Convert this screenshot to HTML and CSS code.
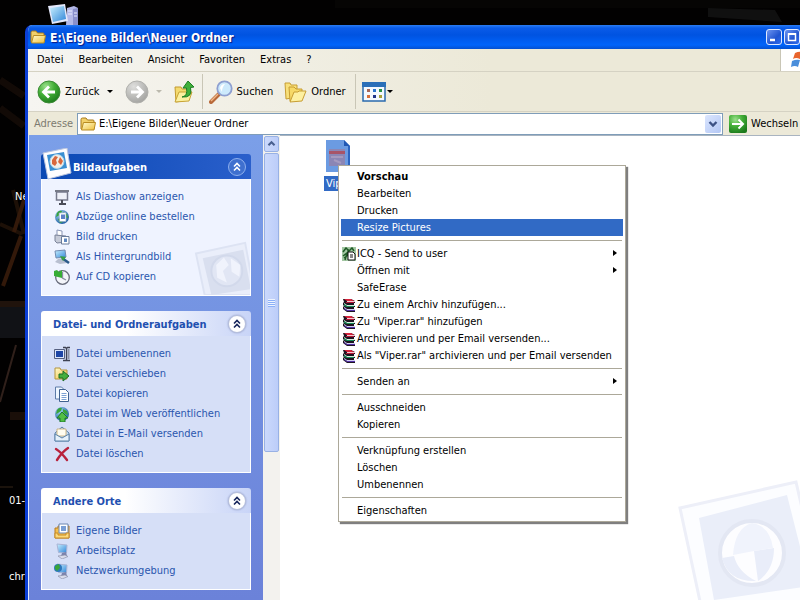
FILE: index.html
```html
<!DOCTYPE html>
<html lang="de">
<head>
<meta charset="utf-8">
<title>E:\Eigene Bilder\Neuer Ordner</title>
<link rel="stylesheet" href="styles.css">
</head>
<body>
<svg class="defs" aria-hidden="true">
  <defs>
    <linearGradient id="gFolder" x1="0" y1="0" x2="1" y2="1"><stop offset="0" stop-color="#fffbd0"/><stop offset="1" stop-color="#efc03a"/></linearGradient>
    <radialGradient id="gGreen" cx=".35" cy=".25" r=".8"><stop offset="0" stop-color="#9be08c"/><stop offset=".5" stop-color="#41ad35"/><stop offset="1" stop-color="#1c7a1c"/></radialGradient>
    <radialGradient id="gGrey" cx=".35" cy=".25" r=".8"><stop offset="0" stop-color="#dededc"/><stop offset="1" stop-color="#a3a3a0"/></radialGradient>
    <linearGradient id="gScreen" x1="0" y1="0" x2="1" y2="1"><stop offset="0" stop-color="#c9f0ff"/><stop offset="1" stop-color="#2f86d8"/></linearGradient>
    <radialGradient id="gGlobe" cx=".35" cy=".3" r=".8"><stop offset="0" stop-color="#9fd6f2"/><stop offset="1" stop-color="#15549e"/></radialGradient>
    <symbol id="folder" viewBox="0 0 16 14"><path d="M1 12V2.500Q1 1 2.500 1H6L7.500 3H13Q14 3 14 4V12Z" fill="#f1d06a" stroke="#a77a1d"/><path d="M1.500 13L3.500 5.500H15.500L14 13Z" fill="url(#gFolder)" stroke="#b98c22"/></symbol>
    <symbol id="chevrons" viewBox="0 0 16 16"><path d="M5 7.500L8 4.500L11 7.500M5 11.500L8 8.500L11 11.500" fill="none" stroke="currentColor" stroke-width="1.600"/></symbol>
    <symbol id="rar" viewBox="0 0 14 14"><path d="M1 1H9L13 3V5L12 5V7L13 7V9H12V11H13V14H5L1 11V9L2 8L1 7V5L2 4Z" fill="#1d1420"/><path d="M2 1H9L12 3H5Z" fill="#d8243c"/><path d="M5 3H13V4H5Z" fill="#f3c9cf"/><path d="M4 4H12V5H4Z" fill="#b01838"/><path d="M2 5L5 7H13V8H5L2 6Z" fill="#d6efe0"/><path d="M2 6L5 8H12V9H5L2 8Z" fill="#168a55"/><path d="M2 9L5 11H13V12H5L2 10Z" fill="#d5d2f2"/><path d="M2 10L5 12H13V13H5L2 11Z" fill="#5432a8"/></symbol>
    <symbol id="pc" viewBox="0 0 16 16"><path d="M3 1L13 2L12.500 10L4.500 9.500Z" fill="url(#gScreen)" stroke="#a8b4d6"/><path d="M8 10L12 9L13 13H7Z" fill="#7c84ad"/><path d="M4 13L11 12L14 13.500L8 16Z" fill="#d9dcea" stroke="#8389a5" stroke-width=".6"/></symbol>
    <symbol id="globe" viewBox="0 0 16 16"><circle cx="8" cy="8" r="7" fill="url(#gGlobe)"/><path d="M3 4Q5 1 8 2L7 5L4 7L2 8ZM9 3L13 5L14 9L11 8L9 6ZM4 10L8 9L9 13L6 14Z" fill="#38a43a"/></symbol>
    <symbol id="doc" viewBox="0 0 16 16"><path d="M1.500 1H7.500L9.500 3V13H1.500Z" fill="#eef6ff" stroke="#5c7ba8"/><path d="M5.500 3.500H11.500L14.500 6.500V15.500H5.500Z" fill="#fff" stroke="#3f618f"/><path d="M7.500 7.500H12.500M7.500 9.500H12.500M7.500 11.500H12.500M7.500 13.500H12.500" stroke="#7da2d4"/></symbol>
  </defs>
</svg>

<main class="desktop">
  <svg class="wallpaper" viewBox="0 0 800 600" preserveAspectRatio="xMinYMin slice" aria-hidden="true">
    <rect width="800" height="600" fill="#020101"/>
    <path d="M0 80L24 96M0 108L24 126" stroke="#120a06" stroke-width="7"/>
    <path d="M13 190L24 234M0 224L22 234" stroke="#1d1007" stroke-width="4" fill="none"/>
    <path d="M21 236L3 286M24 200L14 232" stroke="#33190a" stroke-width="4"/>
    <path d="M0 301H26V338H0Z" fill="#111216"/><path d="M0 301H26V307H0Z" fill="#20130c"/>
    <path d="M16 345L0 402" stroke="#30201b" stroke-width="2"/>
    <path d="M10 412H26V420H10Z" fill="#1a0f09"/><path d="M0 487H13" stroke="#1b130c" stroke-width="2"/>
    <path d="M708 8L775 10L782 22L708 17Z" fill="#101010"/><path d="M335 0H800V8H335Z" fill="#060504"/>
  </svg>
  <svg class="desk-pc" viewBox="0 0 34 24" aria-hidden="true"><path d="M20 7L27 5L31 7V24H19Z" fill="#b4b9e8"/><path d="M26 8L31 7V24H26Z" fill="#8a90cc"/><path d="M21 10H25M21 13H25M27 12H30M27 15H30" stroke="#e9ecff"/><path d="M1 5L18 3L21 20L5 23Z" fill="#e4e8fb"/><path d="M3 7L17 5L19 18L6 21Z" fill="url(#gScreen)"/></svg>
  <span class="desk-label label-new">Neu</span>
  <span class="desk-label label-01">01-</span>
  <span class="desk-label label-chr">chris</span>

  <section class="window">
    <header class="titlebar">
      <svg class="title-icon" aria-hidden="true"><use href="#folder"/></svg>
      <h1>E:\Eigene Bilder\Neuer Ordner</h1>
      <button class="caption" aria-label="Minimieren"><svg viewBox="0 0 14 14"><path d="M3 10H8" stroke="#fff" stroke-width="2.500"/></svg></button>
      <button class="caption" aria-label="Maximieren"><svg viewBox="0 0 14 14"><path d="M3.500 4V10.500H10.500V4Z" fill="none" stroke="#fff" stroke-width="1.500"/><path d="M3 4H11" stroke="#fff" stroke-width="2"/></svg></button>
    </header>

    <nav class="menubar">
      <button>Datei</button><button>Bearbeiten</button><button>Ansicht</button><button>Favoriten</button><button>Extras</button><button>?</button>
      <span class="flag"><svg viewBox="0 0 20 18" aria-hidden="true"><path d="M4 2Q8 0 12 1L9 8Q5 6 2 8Z" fill="#e8642c"/><path d="M1 10Q5 8 9 9L7 16Q4 14 0 16Z" fill="#4a8edb"/><path d="M13 2Q16 3 20 1L18 8Q14 9 11 8Z" fill="#78b943"/></svg></span>
    </nav>

    <div class="toolbar">
      <button class="tool">
        <svg class="round" viewBox="0 0 24 24" aria-hidden="true"><circle cx="12" cy="12" r="11" fill="url(#gGreen)" stroke="#3b8a35"/><path d="M18 12H7M12 6.500L6.500 12L12 17.500" fill="none" stroke="#fff" stroke-width="2.800"/></svg>
        Zurück
      </button>
      <button class="drop" aria-label="Verlauf zurück"><span class="arrow"></span></button>
      <button class="tool forward" aria-label="Vorwärts" disabled>
        <svg class="round" viewBox="0 0 24 24" aria-hidden="true"><circle cx="12" cy="12" r="11" fill="url(#gGrey)" stroke="#b0b0ac"/><path d="M6 12H17M12 6.500L17.500 12L12 17.500" fill="none" stroke="#fff" stroke-width="2.800"/></svg>
      </button>
      <button class="drop" aria-label="Verlauf vorwärts" disabled><span class="arrow"></span></button>
      <button class="tool up" aria-label="Aufwärts">
        <svg class="round" viewBox="0 0 24 24" aria-hidden="true"><path d="M3 7H9L10 9H17V20L4 22Z" fill="#f4da6e" stroke="#c29a2e"/><path d="M3 22L7 12H20L17 21Z" fill="#fbf0a0" stroke="#c8a436"/><path d="M10 17Q16 16 14.500 8H11L16 1L22 7L18.500 7.500Q21 18 10 17Z" fill="#3fb03a" stroke="#1f7e24"/></svg>
      </button>
      <span class="divider"></span>
      <button class="tool">
        <svg class="round" viewBox="0 0 24 24" aria-hidden="true"><path d="M10 14L2 22" stroke="#b8693a" stroke-width="4" stroke-linecap="round"/><path d="M9 14L2 21" stroke="#f0b888" stroke-width="1.500"/><circle cx="15.500" cy="8.500" r="7.200" fill="#cdeafc" stroke="#8e9fd0" stroke-width="1.800"/><path d="M11 8Q12 4 16 4Q13 7 13 12Z" fill="#fff"/></svg>
        Suchen
      </button>
      <button class="tool folders">
        <svg class="round" viewBox="0 0 24 24" aria-hidden="true"><path d="M2 3H7L8 5H14V17L3 19Z" fill="#f8e07a" stroke="#c79d33"/><path d="M6 7H11L13 9H19V19L7 21Z" fill="#f6d967" stroke="#c79d33"/><path d="M7 22L11 12H15L16 11H23L19 21Z" fill="#fdf0a0" stroke="#c79d33"/></svg>
        Ordner
      </button>
      <span class="divider"></span>
      <button class="tool views" aria-label="Ansichten">
        <svg class="round" viewBox="0 0 24 20" aria-hidden="true"><path d="M1 1H23V19H1Z" fill="#f4f9fe" stroke="#2a6aad" stroke-width="1.500"/><path d="M0 0H24V5H0Z" fill="#2a6fb8"/><path d="M5 7H8V10H5Z" fill="#a86858"/><path d="M11 7H14V10H11Z" fill="#2a74cc"/><path d="M17 7H20V10H17Z" fill="#289044"/><path d="M5 13H8V16H5Z" fill="#d8703a"/><path d="M11 13H14V16H11Z" fill="#1e3488"/><path d="M17 13H20V16H17Z" fill="#a8a03a"/></svg>
        <span class="arrow"></span>
      </button>
    </div>

    <form class="addressbar">
      <label for="address">Adresse</label>
      <div class="combo">
        <svg aria-hidden="true"><use href="#folder"/></svg>
        <input id="address" type="text" value="E:\Eigene Bilder\Neuer Ordner">
        <button type="button" class="combo-drop" aria-label="Liste öffnen"><svg viewBox="0 0 16 18"><path d="M4.500 7L8 10.500L11.500 7" fill="none" stroke="#3d5285" stroke-width="2.400"/></svg></button>
      </div>
      <button type="button" class="go"><svg viewBox="0 0 18 18" aria-hidden="true"><rect width="18" height="18" rx="2" fill="url(#gGreen)"/><path d="M3 9H14M9.500 4.500L14 9L9.500 13.500" fill="none" stroke="#fff" stroke-width="2"/></svg>Wechseln</button>
    </form>

    <div class="body">
      <aside class="sidebar">
        <section class="panel primary">
          <header>
            <svg class="photo" viewBox="0 0 30 32" aria-hidden="true"><path d="M1 5L25 0L29 25L6 31Z" fill="#fdfdff" stroke="#b9c4de"/><path d="M5 7L22 4L25 20L8 23Z" fill="#3a8fd2"/><circle cx="15" cy="13.500" r="7" fill="#f1efe9" stroke="#a9d4ec"/><path d="M10 12L13 8L16 9L14 12L15 15L13 18L10 16ZM18 9L21 13L19 17L16 14Z" fill="#d8683d"/></svg>
            <h2>Bildaufgaben</h2>
            <button aria-label="Einklappen"><svg><use href="#chevrons"/></svg></button>
          </header>
          <ul>
            <li><a href="#"><svg viewBox="0 0 16 16"><path d="M1 2H15" stroke="#777a86" stroke-width="2"/><path d="M2.500 3H13.500V11H2.500Z" fill="#eef0f8" stroke="#777a8c" stroke-width="1.500"/><path d="M8 11V14M5 15H12" stroke="#4a4c58" stroke-width="2"/></svg>Als Diashow anzeigen</a></li>
            <li><a href="#"><svg><use href="#globe"/></svg><svg class="over" viewBox="0 0 16 16"><path d="M5 4L12 3.500V12.500H5.500Z" fill="#fff" stroke="#8aa3c0" stroke-width=".7"/><path d="M7 5.500H11V10H7Z" fill="#5c80c8"/></svg>Abzüge online bestellen</a></li>
            <li><a href="#"><svg viewBox="0 0 16 16"><path d="M3 1L8 2V7H3Z" fill="#fff" stroke="#8995b5"/><path d="M1 6L12 7V13L3 14L1 12Z" fill="#c6cbd8" stroke="#7b8398"/><path d="M7.500 7.500H15V15H7.500Z" fill="#fff" stroke="#6a7c9a"/><path d="M10 9.500H13V13H10Z" fill="#5f87bf"/></svg>Bild drucken</a></li>
            <li><a href="#"><svg viewBox="0 0 16 16"><path d="M1 2L11 1L12 8L2 9Z" fill="url(#gScreen)" stroke="#708ab0"/><path d="M4 10L10 9L13 14L6 15L1 13Z" fill="#b8bfd0"/><path d="M8 9L15 14" stroke="#2b5a8a" stroke-width="2.500"/><path d="M6 7L12 8L9 12Z" fill="#37a045"/></svg>Als Hintergrundbild</a></li>
            <li><a href="#"><svg viewBox="0 0 16 16"><circle cx="8.500" cy="8.500" r="6.800" fill="#f4f5fa" stroke="#686c7c" stroke-width="1.300"/><path d="M8.500 3V9L12 11" fill="none" stroke="#8a8fa2" stroke-width="1.300"/><path d="M0 2L3 1L5 3L8 1V9L0 7Z" fill="#36ad35"/></svg>Auf CD kopieren</a></li>
          </ul>
          <svg class="panel-mark" viewBox="0 0 58 56" aria-hidden="true"><path d="M2 13L53 2L63 56H11Z" fill="#eaeefa" stroke="#dde3f3" stroke-width="2"/><path d="M9 18L51 9L59 50L18 56Z" fill="#d9dfef"/><circle cx="34" cy="31" r="16" fill="#e1e6f4" stroke="#d2d9eb" stroke-width="2"/><path d="M23 25L31 17L36 25L30 31L34 43L24 38ZM38 18L48 25L47 37L39 32Z" fill="#f0f3fc"/></svg>
        </section>

        <section class="panel">
          <header><h2>Datei- und Ordneraufgaben</h2><button aria-label="Einklappen"><svg><use href="#chevrons"/></svg></button></header>
          <ul>
            <li><a href="#"><svg viewBox="0 0 16 16"><path d="M.5 3.500H10.500V12.500H.5Z" fill="#dbe6fa" stroke="#566080"/><path d="M2 5H9V11H2Z" fill="#1d45a5"/><path d="M9 1.500H11.500L12.500 2.500L13.500 1.500H16M12.500 2V14M9 14.500H16" fill="none" stroke="#3e4252" stroke-width="1.300"/><path d="M14.500 3V13" stroke="#8a90a4" stroke-width="2"/></svg>Datei umbenennen</a></li>
            <li><a href="#"><svg viewBox="0 0 16 16"><path d="M1 13V2H6L7 4H13V13Z" fill="url(#gFolder)" stroke="#b4943c"/><path d="M5 12V8H9V5L15 10L9 15V12Z" fill="#45ae3e" stroke="#1d6e25"/></svg>Datei verschieben</a></li>
            <li><a href="#"><svg><use href="#doc"/></svg>Datei kopieren</a></li>
            <li><a href="#"><svg><use href="#globe"/></svg><svg class="over" viewBox="0 0 16 16"><path d="M8 6L14 12H11V16H6V12H3Z" fill="#52bf45" stroke="#1f7a28"/></svg>Datei im Web veröffentlichen</a></li>
            <li><a href="#"><svg viewBox="0 0 16 16"><path d="M1 7L8 1L15 7V15H1Z" fill="#c4dcf2" stroke="#5c83aa"/><path d="M3 3H12V10H3Z" fill="#fffdf0" stroke="#c3a46a" stroke-width=".8"/><path d="M1 8L8 12L15 8V15H1Z" fill="#e5f1fb" stroke="#5c83aa"/></svg>Datei in E-Mail versenden</a></li>
            <li><a href="#"><svg viewBox="0 0 16 16"><path d="M2 3Q7 6 13 14M14 2Q8 6 3 14" fill="none" stroke="#b8213c" stroke-width="2.400" stroke-linecap="round"/></svg>Datei löschen</a></li>
          </ul>
        </section>

        <section class="panel">
          <header><h2>Andere Orte</h2><button aria-label="Einklappen"><svg><use href="#chevrons"/></svg></button></header>
          <ul>
            <li><a href="#"><svg viewBox="0 0 16 16"><path d="M1 15V5H4V3H15V15Z" fill="#f4bf4c" stroke="#b77b20"/><path d="M5 1H14V10H5Z" fill="#fff" stroke="#6c86b0"/><path d="M7 3H12V8H7Z" fill="#7a9fd5"/><path d="M1 15V10H4V12H12V10H15V15Z" fill="#fcd979" stroke="#c68a28"/></svg>Eigene Bilder</a></li>
            <li><a href="#"><svg><use href="#pc"/></svg>Arbeitsplatz</a></li>
            <li><a href="#"><svg><use href="#pc"/></svg><svg class="over" viewBox="0 0 16 16"><circle cx="4" cy="5" r="4" fill="#2d78bb"/><path d="M1 3L5 1L6 5L3 8L1 6Z" fill="#38a43a"/></svg>Netzwerkumgebung</a></li>
          </ul>
        </section>
      </aside>

      <div class="scrollbar" aria-hidden="true">
        <span class="scroll-up"><svg viewBox="0 0 15 16"><path d="M4 9.500L7.500 6L11 9.500" fill="none" stroke="#4a6191" stroke-width="2.400"/></svg></span>
        <span class="thumb"></span>
      </div>

      <div class="files">
        <svg class="mark" viewBox="0 0 122 120" aria-hidden="true">
          <path d="M2 28L118 2L150 140H26Z" fill="#fcfdff" stroke="#edeff8" stroke-width="3"/>
          <path d="M21 38L109 15L132 106L36 120Z" fill="#eaeef9"/>
          <circle cx="74" cy="73" r="32" fill="#fdfdff" stroke="#e3e7f3" stroke-width="4"/>
          <path d="M44 78L56 76Q60 92 78 101Q50 102 44 78ZM76 71L96 68Q96 90 80 101Z" fill="#e9edf9"/>
          <path d="M74 43Q57 48 55 75L76 71L95 68Q92 46 74 43Z" fill="#f0f3fc"/>
        </svg>
        <figure class="file">
          <svg viewBox="0 0 24 32" aria-hidden="true"><path d="M0 0H18L24 6V32H0Z" fill="#6b9be2"/><path d="M18 0V6H24Z" fill="#2158b4"/><path d="M22 6H24V32H22Z" fill="#2d64c0"/><path d="M3 9H19V26H3Z" fill="#8b86b5"/><path d="M3 11H19V14H3Z" fill="#a85468"/><path d="M5 17H17M8 20L15 23" stroke="#a59abf" stroke-width="2"/></svg>
          <figcaption>Viper</figcaption>
        </figure>
      </div>
    </div>
  </section>

  <div class="context" role="menu">
    <button role="menuitem" class="default">Vorschau</button>
    <button role="menuitem">Bearbeiten</button>
    <button role="menuitem">Drucken</button>
    <button role="menuitem" class="active">Resize Pictures</button>
    <hr>
    <button role="menuitem" class="sub"><svg viewBox="0 0 14 14" aria-hidden="true"><path d="M0 0H14V14H0Z" fill="#a3c7a3"/><path d="M1 5L4 1L7 4L10 1L12 4M1 9L5 6L3 13M6 2V8L2 11" fill="none" stroke="#1f5a26" stroke-width="1.500"/><path d="M6 5H11L13 7V13H6Z" fill="#fff" stroke="#111"/><path d="M8 8H11M8 10H11" stroke="#111"/></svg>ICQ - Send to user</button>
    <button role="menuitem" class="sub">Öffnen mit</button>
    <button role="menuitem">SafeErase</button>
    <button role="menuitem"><svg aria-hidden="true"><use href="#rar"/></svg>Zu einem Archiv hinzufügen...</button>
    <button role="menuitem"><svg aria-hidden="true"><use href="#rar"/></svg>Zu "Viper.rar" hinzufügen</button>
    <button role="menuitem"><svg aria-hidden="true"><use href="#rar"/></svg>Archivieren und per Email versenden...</button>
    <button role="menuitem"><svg aria-hidden="true"><use href="#rar"/></svg>Als "Viper.rar" archivieren und per Email versenden</button>
    <hr>
    <button role="menuitem" class="sub">Senden an</button>
    <hr>
    <button role="menuitem">Ausschneiden</button>
    <button role="menuitem">Kopieren</button>
    <hr>
    <button role="menuitem">Verknüpfung erstellen</button>
    <button role="menuitem">Löschen</button>
    <button role="menuitem">Umbenennen</button>
    <hr>
    <button role="menuitem">Eigenschaften</button>
  </div>
</main>
</body>
</html>
```
FILE: styles.css
```css
* { box-sizing: border-box; }

body {
  margin: 0;
  background: #020101;
  color: #000;
  font: 11px/16px Tahoma, "DejaVu Sans Condensed", "Noto Sans", sans-serif;
}

button, input {
  margin: 0;
  padding: 0;
  border: 0;
  background: none;
  color: inherit;
  font: inherit;
  white-space: nowrap;
}

h1, h2, ul, figure { margin: 0; padding: 0; }
.defs { position: absolute; width: 0; height: 0; }

.desktop {
  position: relative;
  display: flex;
  min-height: 100vh;
  padding: 25px 0 0 25px;
  overflow: hidden;
}
.wallpaper { position: absolute; inset: 0; width: 100%; height: 100%; }
.desk-pc { position: absolute; left: 47px; top: 1px; width: 34px; height: 24px; }
.desk-label { position: absolute; color: #fff; white-space: nowrap; }
.label-new { left: 15px; top: 189px; }
.label-01 { left: 9px; top: 493px; }
.label-chr { left: 9px; top: 569px; }

.window {
  position: relative;
  flex: 1;
  min-width: 0;
  display: flex;
  flex-direction: column;
  border-left: 3px solid #0b3fd6;
  border-top-left-radius: 7px;
  background: #ece9d8;
  overflow: hidden;
}

.titlebar {
  display: flex;
  align-items: center;
  gap: 2px;
  height: 24px;
  padding-left: 2px;
  background: linear-gradient(#2a7df4 0, #0a5be8 3px, #0053e1 10px, #0064fb 20px, #0450d0 24px);
  color: #fff;
}
.title-icon { width: 16px; height: 14px; }
.titlebar h1 {
  flex: 1;
  padding: 2px 0 0 2px;
  font: bold 12px/22px "Trebuchet MS", "DejaVu Sans Condensed", sans-serif;
  text-shadow: 1px 1px 1px #0a1883;
  white-space: nowrap;
}
.caption {
  width: 16px;
  height: 16px;
  border: 1px solid #dfe9ff;
  border-radius: 3px;
  background: linear-gradient(135deg, #6d94f0, #2054d0 60%, #2f6df0);
}
.caption svg { display: block; width: 14px; height: 14px; }

.menubar {
  display: flex;
  align-items: stretch;
  gap: 15px;
  height: 23px;
  padding-left: 9px;
  border-bottom: 1px solid #d5d2c3;
  background: linear-gradient(90deg, #f6f5f1, #ece9d8 60%);
}
.flag {
  display: flex;
  align-items: center;
  width: 20px;
  margin-left: auto;
  padding-left: 10px;
  border-left: 1px solid #c9c6b6;
  background: #fff;
  overflow: hidden;
}
.flag svg { flex: none; width: 20px; height: 18px; }

.toolbar {
  display: flex;
  align-items: center;
  height: 40px;
  padding-left: 9px;
  border-bottom: 1px solid #d5d2c3;
  background: linear-gradient(90deg, #f6f5f1, #ece9d8 60%);
}
.tool { display: flex; align-items: center; gap: 4px; }
.round { width: 24px; height: 24px; }
.drop { padding: 8px 7px; }
.forward { margin-left: 5px; }
.up { margin-left: 3px; }
.folders { margin: 0 3px 0 10px; }
.arrow {
  display: block;
  border: 3px solid transparent;
  border-top-color: #000;
  border-bottom-width: 0;
}
:disabled .arrow { border-top-color: #bbb9ad; }
.divider { width: 1px; height: 35px; margin: 0 6px; background: #c9c6b6; }
.views { gap: 1px; }
.views .round { height: 20px; }

.addressbar {
  display: flex;
  align-items: center;
  height: 23px;
  padding-left: 6px;
  background: #ece9d8;
}
.addressbar label { width: 43px; color: #7d7b70; }
.combo {
  display: flex;
  flex: 1;
  align-items: center;
  height: 22px;
  min-width: 0;
  border: 1px solid #7f9db9;
  background: #fff;
}
.combo > svg { flex: none; width: 16px; height: 14px; margin: 0 3px 0 2px; }
.combo input { flex: 1; min-width: 0; height: 18px; outline: 0; }
.combo-drop {
  width: 16px;
  height: 18px;
  margin-right: 1px;
  border-radius: 2px;
  background: linear-gradient(135deg, #dbe6fe, #b3c7f5);
}
.combo-drop svg { display: block; width: 16px; height: 18px; }
.go { display: flex; align-items: center; gap: 4px; width: 77px; padding-left: 6px; }
.go svg { flex: none; width: 18px; height: 18px; }

.body { display: flex; flex: 1; min-height: 0; }

.sidebar {
  display: flex;
  flex-direction: column;
  gap: 15px;
  width: 235px;
  padding: 19px 12px 10px 12px;
  border-left: 1px solid #dfe8fb;
  background: linear-gradient(#7b9fe8, #6b82d9);
}
.panel { position: relative; }
.panel header {
  display: flex;
  align-items: center;
  height: 25px;
  padding: 0 5px 0 12px;
  border-radius: 3px 3px 0 0;
  background: linear-gradient(90deg, #fff 40%, #c8d4f7);
}
.panel h2 {
  flex: 1;
  padding-top: 3px;
  color: #1f50b0;
  font-size: 11px;
  line-height: 16px;
  white-space: nowrap;
}
.panel header button {
  width: 18px;
  height: 18px;
  border: 1px solid #b6bfdc;
  border-radius: 50%;
  background: #fff;
  box-shadow: 0 0 2px #8b97c4;
  color: #16255c;
}
.panel header button svg { display: block; width: 16px; height: 16px; }
.panel ul {
  padding: 8px 0 8px 12px;
  border: 1px solid #fff;
  border-top: 0;
  background: #d6dff7;
  list-style: none;
}
.panel a {
  position: relative;
  display: flex;
  align-items: center;
  gap: 6px;
  height: 20px;
  color: #2a56ae;
  text-decoration: none;
  white-space: nowrap;
}
.panel a svg { width: 16px; height: 16px; }
.panel a .over { position: absolute; left: 0; top: 2px; }
.panel.primary header { padding-left: 32px; background: linear-gradient(90deg, #0a48b4, #2a5fcb); }
.panel.primary h2 { color: #fff; }
.panel.primary header button { border-color: #8fb0ee; background: #3f70cf; box-shadow: none; color: #fff; }
.panel.primary ul { background: #eff3ff; }
.photo { position: absolute; left: 1px; top: -6px; width: 30px; height: 32px; }
.panel-mark { position: absolute; right: 1px; bottom: 1px; width: 56px; height: 54px; }
.primary ul a { z-index: 1; }

.scrollbar { width: 17px; padding: 1px; background: #f3f2ee; }
.scroll-up, .thumb {
  display: block;
  border: 1px solid #98b1e4;
  border-radius: 2px;
  background: linear-gradient(90deg, #cbd9fc, #bccdf9);
}
.scroll-up { height: 16px; }
.scroll-up svg { display: block; width: 13px; height: 14px; }
.thumb {
  height: 299px;
  margin-top: 1px;
  background:
    repeating-linear-gradient(#eef4fe 0 1px, #8cb0f8 1px 2px) center / 7px 8px no-repeat,
    linear-gradient(90deg, #cbd9fc, #bccdf9);
}

.files {
  position: relative;
  flex: 1;
  min-width: 0;
  padding: 4px 0 0 44px;
  border-top: 1px solid #a9b4c0;
  background: #fff;
  overflow: hidden;
}
.mark { position: absolute; right: 0; bottom: 0; width: 122px; height: 120px; }
.file { display: flex; flex-direction: column; align-items: flex-start; gap: 4px; }
.file svg { width: 24px; height: 32px; margin-left: 2px; }
.file figcaption { height: 15px; padding: 0 2px; background: #316ac5; color: #fff; line-height: 15px; }

.context {
  position: absolute;
  left: 338px;
  top: 165px;
  width: 288px;
  padding: 2px;
  border: 1px solid #aca899;
  background: #fff;
  box-shadow: 2px 2px 1px rgba(0, 0, 0, .5);
}
.context button {
  position: relative;
  display: block;
  width: 100%;
  height: 17px;
  padding-left: 16px;
  line-height: 17px;
  text-align: left;
}
.context svg { position: absolute; left: 1px; top: 2px; width: 14px; height: 14px; }
.context .default { font-weight: bold; }
.context .active { background: #316ac5; color: #fff; }
.context .sub::after {
  content: "";
  position: absolute;
  right: 6px;
  top: 5px;
  border: 3px solid transparent;
  border-left: 4px solid #000;
  border-right: 0;
}
.context hr { height: 1px; margin: 4px 1px; border: 0; background: #aca899; }
```
